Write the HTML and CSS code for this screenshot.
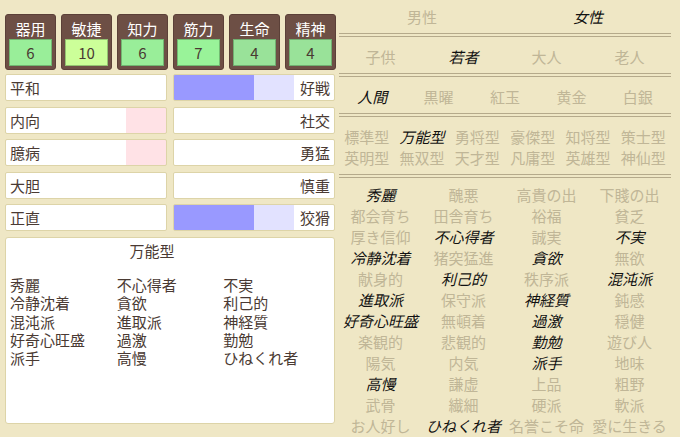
FILE: index.html
```html
<!DOCTYPE html>
<html lang="ja">
<head>
  <meta charset="UTF-8" />
  <meta name="viewport" content="width=device-width, initial-scale=1" />
  <title>キャラクター作成</title>
  <link rel="stylesheet" href="styles.css">
</head>
<body>
<div class="page">

  <div class="left">
    <!-- 能力値 -->
    <div class="stats">
      <div class="stat"><div class="stat-name">器用</div><div class="stat-value v6">6</div></div>
      <div class="stat"><div class="stat-name">敏捷</div><div class="stat-value v10">10</div></div>
      <div class="stat"><div class="stat-name">知力</div><div class="stat-value v6">6</div></div>
      <div class="stat"><div class="stat-name">筋力</div><div class="stat-value v7">7</div></div>
      <div class="stat"><div class="stat-name">生命</div><div class="stat-value v4">4</div></div>
      <div class="stat"><div class="stat-name">精神</div><div class="stat-value v4">4</div></div>
    </div>

    <!-- 性格の傾向 -->
    <div class="bars">
      <div class="bar">平和</div>
      <div class="bar to-right war">好戦</div>
      <div class="bar introvert">内向</div>
      <div class="bar to-right">社交</div>
      <div class="bar introvert">臆病</div>
      <div class="bar to-right">勇猛</div>
      <div class="bar">大胆</div>
      <div class="bar to-right">慎重</div>
      <div class="bar">正直</div>
      <div class="bar to-right war">狡猾</div>
    </div>

    <div class="summary">
      <div class="summary-title">万能型</div>
      <div class="summary-list">
        <span>秀麗</span><span>不心得者</span><span>不実</span>
        <span>冷静沈着</span><span>貪欲</span><span>利己的</span>
        <span>混沌派</span><span>進取派</span><span>神経質</span>
        <span>好奇心旺盛</span><span>過激</span><span>勤勉</span>
        <span>派手</span><span>高慢</span><span>ひねくれ者</span>
      </div>
    </div>
  </div>

  <div class="options">
    <div class="choice cols2 first">
      <span>男性</span><span class="on">女性</span>
    </div>
    <div class="choice cols4">
      <span>子供</span><span class="on">若者</span><span>大人</span><span>老人</span>
    </div>
    <div class="choice cols5">
      <span class="on">人間</span><span>黒曜</span><span>紅玉</span><span>黄金</span><span>白銀</span>
    </div>
    <div class="choice cols6">
      <span>標準型</span><span class="on">万能型</span><span>勇将型</span><span>豪傑型</span><span>知将型</span><span>策士型</span>
      <span>英明型</span><span>無双型</span><span>天才型</span><span>凡庸型</span><span>英雄型</span><span>神仙型</span>
    </div>
    <div class="choice cols4 last">
      <span class="on">秀麗</span><span>醜悪</span><span>高貴の出</span><span>下賤の出</span>
      <span>都会育ち</span><span>田舎育ち</span><span>裕福</span><span>貧乏</span>
      <span>厚き信仰</span><span class="on">不心得者</span><span>誠実</span><span class="on">不実</span>
      <span class="on">冷静沈着</span><span>猪突猛進</span><span class="on">貪欲</span><span>無欲</span>
      <span>献身的</span><span class="on">利己的</span><span>秩序派</span><span class="on">混沌派</span>
      <span class="on">進取派</span><span>保守派</span><span class="on">神経質</span><span>鈍感</span>
      <span class="on">好奇心旺盛</span><span>無頓着</span><span class="on">過激</span><span>穏健</span>
      <span>楽観的</span><span>悲観的</span><span class="on">勤勉</span><span>遊び人</span>
      <span>陽気</span><span>内気</span><span class="on">派手</span><span>地味</span>
      <span class="on">高慢</span><span>謙虚</span><span>上品</span><span>粗野</span>
      <span>武骨</span><span>繊細</span><span>硬派</span><span>軟派</span>
      <span>お人好し</span><span class="on">ひねくれ者</span><span>名誉こそ命</span><span>愛に生きる</span>
    </div>
  </div>

</div>
</body>
</html>
```

FILE: styles.css
```css
body {
  margin: 0;
  background: #efe7c5;
  color: #4a3a33;
  font-family: "Noto Sans CJK JP", "Noto Sans", sans-serif;
  font-size: 15px;
}

.page {
  display: flex;
  padding: 0 5px;
}

.left {
  width: 330px;
  padding-top: 14px;
}

/* 能力値 */
.stats {
  display: grid;
  grid-template-columns: repeat(6, 51px);
  column-gap: 5px;
}

.stat {
  background: #6d4f45;
  border: 1px solid #5b4038;
  border-radius: 3px;
  padding: 3px;
  height: 56px;
  box-sizing: border-box;
}

.stat-name {
  color: #fff;
  text-align: center;
  line-height: 21px;
  height: 21px;
}

.stat-value {
  height: 27px;
  box-sizing: border-box;
  border: 1px solid rgba(40, 80, 40, 0.35);
  text-align: center;
  line-height: 25px;
  color: #4a3a33;
  background: #99ee99;
}

.stat-value.v10 { background: #ccff99; }
.stat-value.v7 { background: #99f399; }
.stat-value.v4 { background: #99e299; }

/* 性格の傾向 */
.bars {
  display: grid;
  grid-template-columns: 162px 162px;
  column-gap: 6px;
  row-gap: 5.5px;
  margin-top: 4px;
}

.bar {
  height: 27px;
  box-sizing: border-box;
  background: #fff;
  border: 1px solid #ddd4a8;
  border-radius: 2px;
  padding: 0 4px;
  line-height: 25px;
}

.bar.to-right {
  text-align: right;
}

.bar.war {
  background: linear-gradient(to right, #9999ff 50%, #e2e2ff 50%, #e2e2ff 75%, #fff 75%);
}

.bar.introvert {
  background: linear-gradient(to right, #fff 75%, #ffe2e6 75%);
}

.summary {
  margin-top: 6px;
  height: 187px;
  box-sizing: border-box;
  background: #fff;
  border: 1px solid #ddd4a8;
  border-radius: 3px;
  padding: 2px 4px;
}

.summary-title {
  line-height: 21px;
  text-align: center;
  padding-right: 36px;
  margin-bottom: 15px;
}

.summary-list {
  display: grid;
  grid-template-columns: repeat(3, 1fr);
  line-height: 18.3px;
}

/* 選択肢 */
.options {
  width: 332px;
  margin-left: 4px;
}

.choice {
  display: grid;
  text-align: center;
  line-height: 21px;
  padding: 9px 0 6px;
  border-bottom: 4px double #b5aa8b;
  color: #c0b697;
}

.choice.first {
  padding-top: 6px;
}

.choice.last {
  border-bottom: none;
  padding-top: 6px;
}

.cols2 { grid-template-columns: repeat(2, 1fr); }
.cols4 { grid-template-columns: repeat(4, 1fr); }
.cols5 { grid-template-columns: repeat(5, 1fr); }
.cols6 { grid-template-columns: repeat(6, 1fr); }

.choice span {
  white-space: nowrap;
}

.choice .on {
  color: #111;
  font-style: italic;
}
```
